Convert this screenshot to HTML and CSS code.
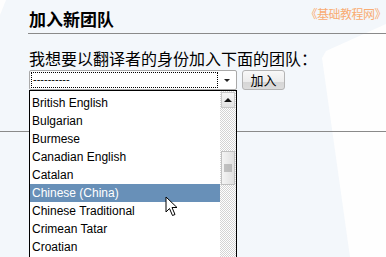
FILE: index.html
```html
<!DOCTYPE html>
<html lang="zh-CN">
<head>
    <meta charset="UTF-8">
    <meta name="viewport" content="width=device-width, initial-scale=1.0">
    <title>加入新团队</title>
    <link rel="stylesheet" href="styles.css">
</head>
<body>
    <!-- soft white shapes behind the page -->
    <svg class="backdrop" width="386" height="257" viewBox="0 0 386 257">
        <polygon points="0,0 6,0 0,15" fill="#fefefe"/>
        <polygon points="326,51 386,24 386,257 350,257 322,58" fill="#fefefe"/>
    </svg>

    <div class="watermark">《基础教程网》</div>

    <div class="page">
        <h2 class="title">加入新团队</h2>

        <form class="join-form">
            <p class="label">我想要以翻译者的身份加入下面的团队：</p>
            <div class="row">
                <div class="select-wrap">
                    <div class="select">
                        <span class="select-value">----------</span>
                        <span class="arrow"></span>
                    </div>

                    <!-- the open dropdown of the select -->
                    <div class="dropdown">
                        <ul class="options">
                            <li>British English</li>
                            <li>Bulgarian</li>
                            <li>Burmese</li>
                            <li>Canadian English</li>
                            <li>Catalan</li>
                            <li class="selected">Chinese (China)</li>
                            <li>Chinese Traditional</li>
                            <li>Crimean Tatar</li>
                            <li>Croatian</li>
                        </ul>
                        <div class="scrollbar">
                            <div class="scroll-up"><span></span></div>
                            <div class="scroll-thumb"><span class="grip"></span></div>
                        </div>
                    </div>
                </div>
                <button type="button" class="join-btn">加入</button>
            </div>
        </form>
    </div>

    <hr class="divider">

    <svg class="cursor" width="14" height="22" viewBox="0 0 14 22">
        <path d="M1 1 L1 16 L4.5 12.5 L7.5 19.5 L10 18.5 L7 11.5 L12 11.5 Z" fill="#fff" stroke="#000" stroke-width="1"/>
    </svg>
</body>
</html>
```

FILE: styles.css
```css
/* page base */
body {
    margin: 0;
    background-color: #f3f7fb;
    font-family: "Noto Sans CJK SC", "Liberation Sans", sans-serif;
    color: #000;
    position: relative;
    height: 257px;
    overflow: hidden;
}

.backdrop {
    position: absolute;
    left: 0;
    top: 0;
}

.watermark {
    position: absolute;
    top: 5px;
    right: 0;
    font-size: 12px;
    letter-spacing: -0.5px;
    color: #f9ac72;
}

.page {
    position: relative;
    padding: 8px 0 0 28px;
}

/* heading with the grey rule under it */
.title {
    margin: 0;
    font-size: 17px;
    font-weight: bold;
    line-height: 22px;
    padding: 0 0 3px 1px;
    border-bottom: 1px solid #8a8a8a;
}

.label {
    margin: 14px 0 2px 1px;
    font-size: 16px;
    line-height: 20px;
}

.row {
    display: flex;
    align-items: flex-start;
    gap: 5px;
    margin-left: 1px;
}

.select-wrap {
    position: relative;
}

/* closed select box */
.select {
    width: 206px;
    height: 18px;
    border: 1px solid #a9a9a9;
    border-radius: 2px;
    background-color: #fff;
    display: flex;
    align-items: center;
    position: relative;
}

.select-value {
    flex: 1;
    height: 14px;
    margin: 0 18px 0 1px;
    border: 1px dotted #000;
    font-family: "Liberation Sans", sans-serif;
    font-size: 11px;
    line-height: 12px;
    padding-left: 1px;
}

.arrow {
    position: absolute;
    right: 6px;
    top: 8px;
    border-left: 3px solid transparent;
    border-right: 3px solid transparent;
    border-top: 3px solid #222;
}

.join-btn {
    width: 43px;
    height: 20px;
    padding: 0;
    border: 1px solid #b4b4b4;
    border-radius: 3px;
    background: linear-gradient(#f8f8f8, #ececec 60%, #d6d6d6 61%, #dcdcdc);
    font-family: "Noto Sans CJK SC", sans-serif;
    font-size: 13px;
    line-height: 16px;
    color: #000;
}

/* popup list of the select */
.dropdown {
    position: absolute;
    left: 0;
    top: 20px;
    width: 206px;
    height: 180px;
    border: 1px solid #000;
    background-color: #fff;
    display: flex;
    z-index: 2;
}

.options {
    list-style: none;
    margin: 0;
    padding: 3px 0 0 0;
    flex: 1;
    font-family: "Liberation Sans", sans-serif;
    font-size: 12px;
}

.options li {
    height: 18px;
    line-height: 18px;
    padding-left: 2px;
    white-space: nowrap;
}

.options li.selected {
    background-color: #6890b8;
    color: #fff;
}

.scrollbar {
    width: 16px;
    padding-top: 1px;
    background-color: #fff;
    background-image: conic-gradient(#d4d4d4 25%, #fff 0 50%, #d4d4d4 0 75%, #fff 0);
    background-size: 2px 2px;
}

.scroll-up {
    height: 14px;
    margin: 0 1px;
    border: 1px solid #c8c8c8;
    background: linear-gradient(#f6f6f6, #e2e2e2);
    display: flex;
    align-items: center;
    justify-content: center;
}

.scroll-up span {
    border-left: 4px solid transparent;
    border-right: 4px solid transparent;
    border-bottom: 4px solid #111;
}

.scroll-thumb {
    height: 32px;
    margin: 43px 1px 0 1px;
    border: 1px solid #c0c0c0;
    background: linear-gradient(to right, #f4f4f4, #e0e0e0);
    display: flex;
    align-items: center;
    justify-content: center;
}

.grip {
    width: 8px;
    height: 8px;
    background-image: radial-gradient(#8a8a8a 0.6px, transparent 0.8px);
    background-size: 2px 2px;
}

.divider {
    position: relative;
    margin: 41px 0 0 0;
    border: none;
    border-top: 1px solid #8a8a8a;
}

.cursor {
    position: absolute;
    left: 165px;
    top: 196px;
    z-index: 3;
}
```
